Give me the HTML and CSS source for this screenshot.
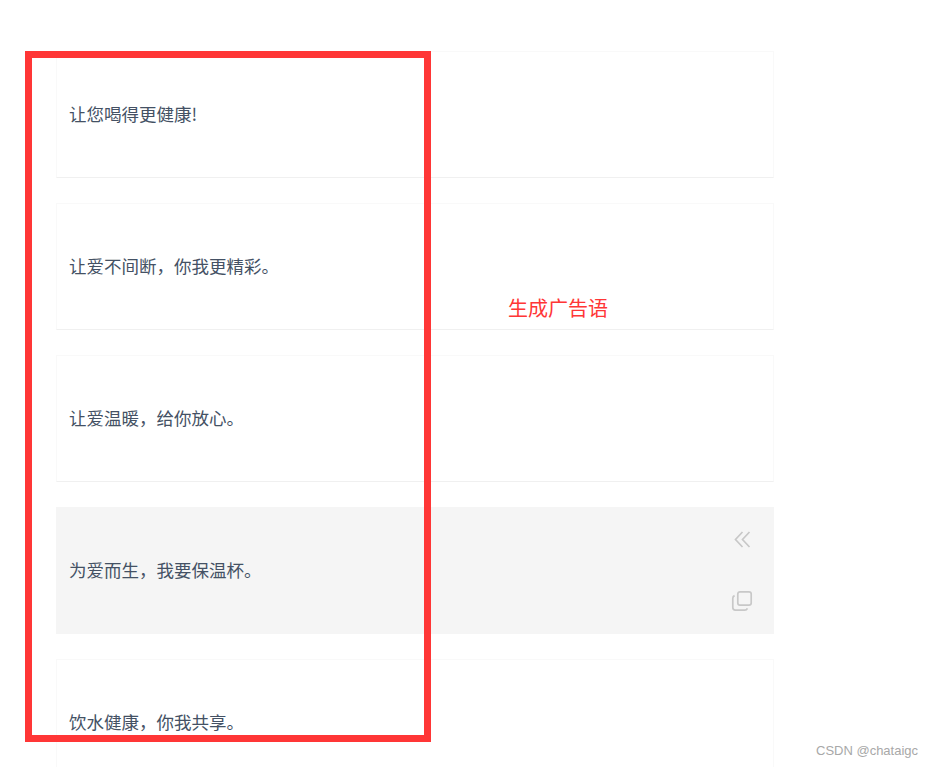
FILE: index.html
```html
<!DOCTYPE html>
<html lang="zh">
<head>
<meta charset="utf-8">
<title>生成广告语</title>
<link rel="stylesheet" href="styles.css">
</head>
<body>
<main class="list">
  <div class="card"><p class="text">让您喝得更健康!</p></div>
  <div class="card"><p class="text">让爱不间断，你我更精彩。</p></div>
  <div class="card"><p class="text">让爱温暖，给你放心。</p></div>
  <div class="card card-active">
    <p class="text">为爱而生，我要保温杯。</p>
    <div class="actions">
      <svg class="icon" width="20" height="20" viewBox="0 0 20 20" fill="none" stroke="#c8c8c8" stroke-width="1.7">
        <path d="M10.5 2 3.5 9.5 10.5 17"/>
        <path d="M17.5 2 10.5 9.5 17.5 17"/>
      </svg>
      <svg class="icon" width="22" height="22" viewBox="0 0 22 22" fill="none" stroke="#c8c8c8" stroke-width="1.7">
        <rect x="6.8" y="1.8" width="13.4" height="13.4" rx="2.2"/>
        <path d="M3.6 5.6C2.4 6.1 1.8 7 1.8 8.2V17.6C1.8 19.2 2.8 20.2 4.4 20.2H13.8C15 20.2 15.9 19.6 16.4 18.4"/>
      </svg>
    </div>
  </div>
  <div class="card"><p class="text">饮水健康，你我共享。</p></div>
</main>
<div class="highlight"></div>
<div class="annotation">生成广告语</div>
<div class="watermark">CSDN @chataigc</div>
</body>
</html>
```
FILE: styles.css
```css
html, body {
  margin: 0;
  height: 767px;
  overflow: hidden;
  background: #fff;
}
body {
  position: relative;
  font-family: "Noto Sans CJK SC", "Noto Sans", sans-serif;
}
.list {
  display: flex;
  flex-direction: column;
  gap: 25px;
  width: 718px;
  padding: 51px 0 0 56px;
}
.card {
  box-sizing: border-box;
  display: flex;
  align-items: center;
  justify-content: space-between;
  flex: none;
  height: 127px;
  padding: 0 20px 0 12px;
  background: #fff;
  border: 1px solid #f9f9f9;
  border-bottom-color: #f0f0f0;
}
.card-active {
  background: #f5f5f5;
  border-color: #f5f5f5;
}
.text {
  margin: 0 0 2px;
  font-size: 17.5px;
  line-height: 24px;
  font-weight: 400;
  color: #445164;
}
.actions {
  display: flex;
  flex-direction: column;
  align-items: center;
  gap: 40px;
}
.icon {
  display: block;
}
.highlight {
  position: absolute;
  left: 25px;
  top: 51px;
  width: 392px;
  height: 677px;
  border: 7px solid #ff3636;
}
.annotation {
  position: absolute;
  left: 508px;
  top: 293px;
  font-size: 20px;
  line-height: 30px;
  font-weight: 400;
  color: #ff3636;
}
.watermark {
  position: absolute;
  left: 816px;
  top: 742px;
  font-family: "Liberation Sans", sans-serif;
  font-size: 13px;
  line-height: 18px;
  color: #a8a8a8;
}
```
